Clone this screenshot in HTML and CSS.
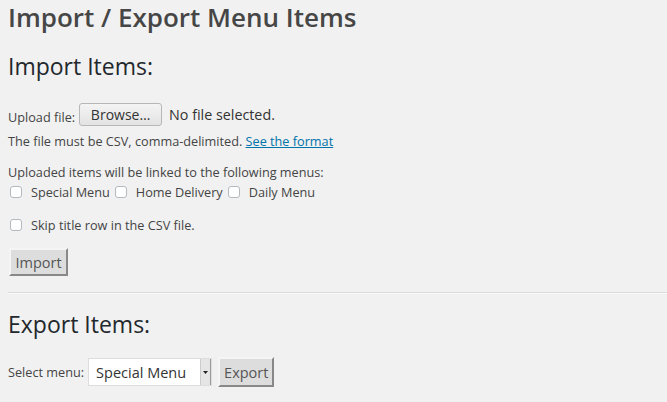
FILE: index.html
```html
<!DOCTYPE html>
<html>
<head>
<meta charset="utf-8">
<link rel="stylesheet" href="styles.css">
</head>
<body>
<div class="wrap">
  <h1 class="title">Import / Export Menu Items</h1>
  <h2 class="section">Import Items:</h2>
  <div class="row upload">
    <span class="lbl">Upload file:</span>
    <span class="browse">Browse…</span>
    <span class="nofile">No file selected.</span>
  </div>
  <p class="note">The file must be CSV, comma-delimited. <a href="#" class="link">See the format</a></p>
  <p class="note linked">Uploaded items will be linked to the following menus:</p>
  <div class="checks">
    <label class="check"><input type="checkbox" class="cb"><span>Special Menu</span></label>
    <label class="check"><input type="checkbox" class="cb"><span>Home Delivery</span></label>
    <label class="check"><input type="checkbox" class="cb"><span>Daily Menu</span></label>
  </div>
  <div class="checks skip">
    <label class="check"><input type="checkbox" class="cb"><span>Skip title row in the CSV file.</span></label>
  </div>
  <button class="btn import">Import</button>
</div>
<hr class="divider">
<div class="wrap">
  <h2 class="section export-h">Export Items:</h2>
  <div class="row exportrow">
    <span class="lbl small">Select menu:</span>
    <div class="select"><span class="sel-text">Special Menu</span><span class="arrow"><svg width="5" height="3" viewBox="0 0 5 3"><path d="M0 0H5L2.5 3Z" fill="#222"/></svg></span></div>
    <button class="btn export">Export</button>
  </div>
</div>
</body>
</html>
```

FILE: styles.css
```css
html, body {
  margin: 0;
  padding: 0;
  background: #f1f1f1;
  font-family: "Open Sans", "Noto Sans", sans-serif;
  color: #444;
}
.wrap {
  padding: 0 8px;
}
.title {
  margin: 0;
  padding-top: 1px;
  font-size: 26px;
  font-weight: 600;
  line-height: 32px;
  color: #464646;
}
.section {
  margin: 18px 0 0;
  font-size: 23px;
  font-weight: 400;
  line-height: 30px;
  color: #23282d;
}
.row {
  display: flex;
  align-items: center;
}
.upload {
  margin-top: 21px;
  height: 24px;
}
.lbl {
  font-size: 12.7px;
  color: #444;
  margin-right: 4px;
  position: relative;
  top: 3px;
}
.browse {
  box-sizing: border-box;
  width: 83px;
  height: 23px;
  border: 1px solid #b7b7b7;
  border-radius: 3px;
  background: linear-gradient(#f4f4f4, #e3e3e3);
  font-size: 14px;
  line-height: 21px;
  text-align: center;
  color: #333;
}
.nofile {
  margin-left: 7px;
  font-size: 14.3px;
  color: #333;
}
.note {
  margin: 5px 0 0;
  font-size: 12.7px;
  line-height: 20px;
  color: #444;
}
.link {
  color: #0073aa;
  text-decoration: underline;
}
.linked {
  margin-top: 11px;
}
.checks {
  display: flex;
  align-items: center;
  margin-top: 0;
  height: 20px;
}
.skip {
  margin-top: 13px;
}
.check {
  display: flex;
  align-items: center;
  font-size: 12.7px;
  color: #444;
}
.cb {
  appearance: none;
  -webkit-appearance: none;
  box-sizing: border-box;
  width: 12px;
  height: 12px;
  margin: 0 9px 0 2px;
  border: 1px solid #b4b9be;
  border-radius: 3px;
  background: #fff;
}
.check span {
  margin-right: 3px;
}
.btn {
  font-family: "Open Sans", "Noto Sans", sans-serif;
  font-size: 14px;
  color: #555;
  background: #dddddd;
  border: 2px solid;
  border-color: #f5f5f5 #888 #888 #f5f5f5;
  padding: 0 4px;
  border-radius: 0;
}
.import {
  margin-top: 13px;
  margin-left: 1px;
  height: 28px;
  width: 59px;
  font-size: 14.5px;
}
.divider {
  margin: 16px 0 0 8px;
  border: 0;
  border-top: 1px solid #dcdcdc;
  border-bottom: 1px solid #fafafa;
  height: 0;
}
.export-h {
  margin-top: 15px;
}
.exportrow {
  margin-top: 18px;
}
.small {
  font-size: 12.7px;
  top: 0;
  margin-right: 4px;
}
.select {
  box-sizing: border-box;
  width: 124px;
  height: 28px;
  background: #fff;
  border: 1px solid #ddd;
  display: flex;
  align-items: center;
  justify-content: space-between;
}
.sel-text {
  font-size: 14.5px;
  color: #333;
  padding-left: 7px;
}
.arrow {
  box-sizing: border-box;
  width: 11px;
  height: 100%;
  background: #e5e5e5;
  border-left: 1px solid #ccc;
  border-right: 1px solid #999;
  display: flex;
  align-items: center;
  justify-content: center;
}
.export {
  margin-left: 6px;
  height: 30px;
  width: 56px;
  font-size: 14.5px;
}
```
